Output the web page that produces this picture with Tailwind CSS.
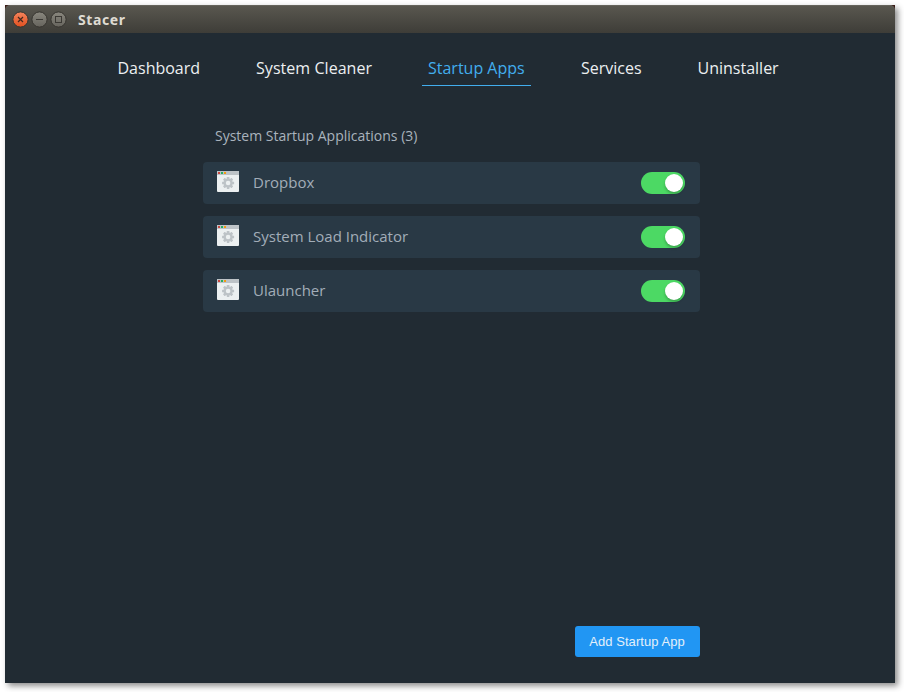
<!DOCTYPE html>
<html lang="en">
<head>
<meta charset="utf-8">
<title>Stacer</title>
<script src="https://cdn.jsdelivr.net/npm/@tailwindcss/browser@4"></script>
</head>
<body class="bg-white w-[904px] h-[692px] overflow-hidden p-[5px] font-['Open_Sans',sans-serif]">
<svg class="hidden">
  <symbol id="app" viewBox="0 0 22 21">
    <rect width="22" height="21" rx="1" fill="#ecf0f1"/>
    <path d="M1 0H21Q22 0 22 1V4H0V1Q0 0 1 0Z" fill="#bdc3c7"/>
    <rect x="1" y="1" width="2" height="2" fill="#c8473f"/>
    <rect x="4" y="1" width="2" height="2" fill="#27ae60"/>
    <rect x="7" y="1" width="2" height="2" fill="#f39c12"/>
    <g fill="#bdc3c7">
      <rect x="9.8" y="6" width="2.6" height="12" rx=".4"/>
      <rect x="9.8" y="6" width="2.6" height="12" rx=".4" transform="rotate(45 11.1 12)"/>
      <rect x="9.8" y="6" width="2.6" height="12" rx=".4" transform="rotate(90 11.1 12)"/>
      <rect x="9.8" y="6" width="2.6" height="12" rx=".4" transform="rotate(135 11.1 12)"/>
      <circle cx="11.1" cy="12" r="4.6"/>
    </g>
    <circle cx="11.1" cy="12" r="2.3" fill="#ecf0f1"/>
  </symbol>
</svg>
<div class="w-[890px] h-[678px] bg-[#212b33] flex flex-col shadow-[3px_3px_6px_rgba(0,0,0,0.45)]">
  <header class="h-7 shrink-0 bg-[#3a1d17]">
    <div class="h-full rounded-t-[5px] bg-linear-to-b from-[#59574f] to-[#3e3d38] border-t border-[#66645c] flex items-center pl-[7px] gap-[2px]">
      <svg width="17" height="17" viewBox="0 0 17 17"><defs><linearGradient id="r" x2="0" y2="1"><stop stop-color="#f4845d"/><stop offset="1" stop-color="#e2501f"/></linearGradient><linearGradient id="g" x2="0" y2="1"><stop stop-color="#89877e"/><stop offset="1" stop-color="#66645d"/></linearGradient></defs><circle cx="8.5" cy="8.5" r="7.6" fill="url(#r)" stroke="#373530"/><path d="M6 6L11 11M11 6L6 11" stroke="#43281e" stroke-width="1.2"/></svg>
      <svg width="17" height="17" viewBox="0 0 17 17"><circle cx="8.5" cy="8.5" r="7.6" fill="url(#g)" stroke="#373530"/><path d="M5 8.5H12" stroke="#3b3934"/></svg>
      <svg width="17" height="17" viewBox="0 0 17 17"><circle cx="8.5" cy="8.5" r="7.6" fill="url(#g)" stroke="#373530"/><rect x="5.5" y="5.5" width="6" height="6" fill="none" stroke="#3b3934"/></svg>
      <span class="ml-[9px] text-[14px] leading-none font-bold tracking-[0.6px] text-[#dfdbd2] font-['Noto_Sans',sans-serif]">Stacer</span>
    </div>
  </header>
  <nav class="flex pl-[106.5px] pt-[18px] text-base text-[#eceff1] whitespace-nowrap">
    <a class="h-[35px] w-[94.5px] px-[6px] mr-[44px] leading-[34px]">Dashboard</a>
    <a class="h-[35px] w-[128px] px-[6px] mr-[44px] tracking-[0.05px] leading-[34px]">System Cleaner</a>
    <a class="h-[35px] w-[109px] px-[6px] mr-[44px] leading-[34px] text-[#42aeee] border-b border-[#42aeee]">Startup Apps</a>
    <a class="h-[35px] w-[73px] px-[6px] mr-[43.5px] leading-[34px]">Services</a>
    <a class="h-[35px] w-[92px] px-[6px] leading-[34px]">Uninstaller</a>
  </nav>
  <main class="w-[497px] ml-[198px] flex-1 flex flex-col pt-[40px] pb-[26px]">
    <h1 class="pl-3 text-sm leading-5 text-[#a9b3bd]">System Startup Applications (3)</h1>
    <ul class="mt-4 flex flex-col gap-3 text-[15px] text-[#a2adb8]">
      <li class="h-[42px] rounded bg-[#293945] flex items-center pl-[14px] pr-[15px]">
        <svg class="w-[22px] h-[21px] -mt-[3px]"><use href="#app"/></svg><span class="ml-[14px] flex-1 pb-[2px]">Dropbox</span>
        <span class="w-11 h-[22px] rounded-full bg-[#4cd964] flex justify-end items-center pr-[2px]"><i class="block size-[18px] rounded-full bg-white shadow-[0_2px_3px_rgba(0,0,0,0.25)]"></i></span>
      </li>
      <li class="h-[42px] rounded bg-[#293945] flex items-center pl-[14px] pr-[15px]">
        <svg class="w-[22px] h-[21px] -mt-[3px]"><use href="#app"/></svg><span class="ml-[14px] flex-1 pb-[2px]">System Load Indicator</span>
        <span class="w-11 h-[22px] rounded-full bg-[#4cd964] flex justify-end items-center pr-[2px]"><i class="block size-[18px] rounded-full bg-white shadow-[0_2px_3px_rgba(0,0,0,0.25)]"></i></span>
      </li>
      <li class="h-[42px] rounded bg-[#293945] flex items-center pl-[14px] pr-[15px]">
        <svg class="w-[22px] h-[21px] -mt-[3px]"><use href="#app"/></svg><span class="ml-[14px] flex-1 pb-[2px]">Ulauncher</span>
        <span class="w-11 h-[22px] rounded-full bg-[#4cd964] flex justify-end items-center pr-[2px]"><i class="block size-[18px] rounded-full bg-white shadow-[0_2px_3px_rgba(0,0,0,0.25)]"></i></span>
      </li>
    </ul>
    <button class="mt-auto self-end w-[125px] h-[31px] rounded-[3px] bg-[#2196f3] text-[13px] tracking-[0.05px] pr-[1px] text-[#e3f0fa] font-['Liberation_Sans',sans-serif]">Add Startup App</button>
  </main>
</div>
</body>
</html>
